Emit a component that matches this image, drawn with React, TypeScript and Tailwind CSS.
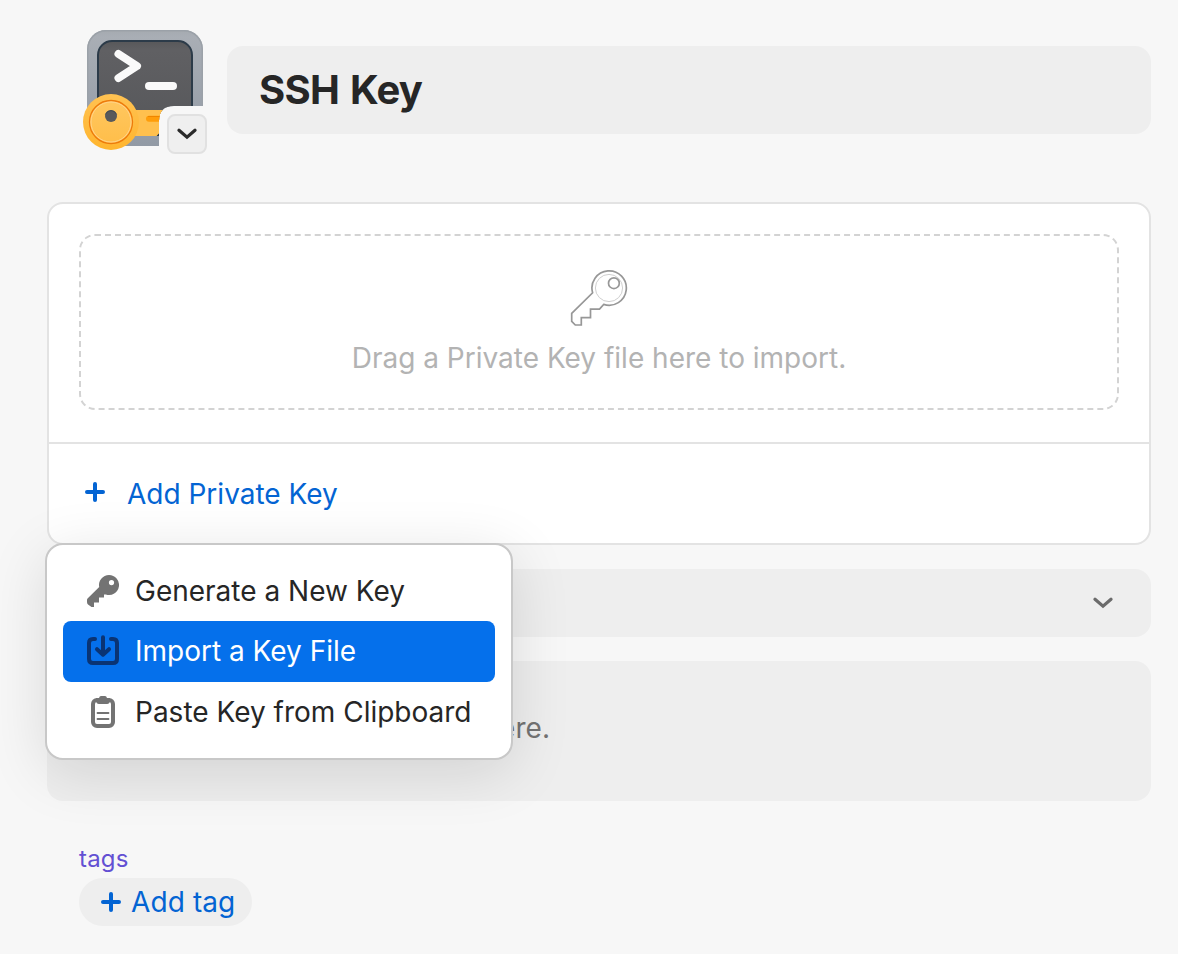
import React from "react";

function SshIcon() {
  return (
    <svg width="124" height="124" viewBox="83 30 124 124" className="block" aria-hidden="true">
      <defs>
        <linearGradient id="frame" x1="0" y1="0" x2="0" y2="1">
          <stop offset="0" stopColor="#a5aab0" />
          <stop offset="0.06" stopColor="#a9aeb5" />
          <stop offset="1" stopColor="#929aa5" />
        </linearGradient>
        <linearGradient id="screen" x1="0" y1="0" x2="0" y2="1">
          <stop offset="0" stopColor="#58585a" />
          <stop offset="0.1" stopColor="#606063" />
          <stop offset="1" stopColor="#56575a" />
        </linearGradient>
        <linearGradient id="gold" x1="0" y1="0" x2="0" y2="1">
          <stop offset="0" stopColor="#ffc252" />
          <stop offset="1" stopColor="#ffb52e" />
        </linearGradient>
        <linearGradient id="disc" x1="0" y1="0" x2="0" y2="1">
          <stop offset="0" stopColor="#ffc75f" />
          <stop offset="1" stopColor="#ffbe4a" />
        </linearGradient>
        <clipPath id="cut">
          <path d="M80 28H207V106H174Q159 106 159 121V154H80Z" />
        </clipPath>
      </defs>
      <g clipPath="url(#cut)">
        <rect x="87" y="30" width="116" height="116" rx="19" fill="url(#frame)" />
        <path d="M87.8 100V49A18.2 18.2 0 0 1 106 30.8H184A18.2 18.2 0 0 1 202.2 49V110" fill="none" stroke="#9ba1a8" strokeWidth="1.4" />
        <rect x="98" y="41" width="94" height="94" rx="14" fill="url(#screen)" stroke="#2c3b49" strokeWidth="2" />
        <path d="M118.500 54 137 66 118.500 78" fill="none" stroke="#fafafa" strokeWidth="8" strokeLinecap="round" strokeLinejoin="round" />
        <path d="M149 86H173" stroke="#fafafa" strokeWidth="8" strokeLinecap="round" />
        <path d="M132 110H170V121L156.500 136H132Z" fill="#ffc04e" />
        <path d="M150 110H170V132.500H159L156 136H150Z" fill="#ffc04e" />
        <path d="M149 118.800H170" stroke="#ff9d0a" strokeWidth="6" strokeLinecap="round" />
        <path d="M148 116.500H170" stroke="#ef8500" strokeWidth="1" />
        <circle cx="111" cy="122" r="28" fill="url(#gold)" />
        <circle cx="111" cy="122" r="21.500" fill="url(#disc)" stroke="#ed7a0b" strokeWidth="1.300" />
        <circle cx="111" cy="122" r="20" fill="none" stroke="#ffd38a" strokeWidth="1" />
        <circle cx="111" cy="116" r="6" fill="#58595b" />
        <path d="M105.400 114.500A6 6 0 0 1 116.600 114.500" fill="none" stroke="#444b52" strokeWidth="1" />
      </g>
    </svg>
  );
}

function Chevron({ className }: { className: string }) {
  return (
    <svg width="20" height="12" viewBox="0 0 20 12" className={className} fill="none" stroke="currentColor" strokeWidth="3.200" strokeLinecap="round" strokeLinejoin="miter" aria-hidden="true">
      <path d="M2 2.200 10 9.200 18 2.200" />
    </svg>
  );
}

function Plus({ className = "" }: { className?: string }) {
  return (
    <svg width="20" height="20" viewBox="0 0 20 20" className={`block shrink-0 ${className}`} stroke="currentColor" strokeWidth="4" strokeLinecap="round" aria-hidden="true">
      <path d="M10 2V18M2 10H18" />
    </svg>
  );
}

function KeyOutline() {
  return (
    <svg width="58" height="58" viewBox="570.3 268.7 58 58" className="block" fill="none" aria-hidden="true">
      <path d="M592.900 292.500A17.200 17.200 0 1 1 604 304.100L599.800 308.800H590.800V317.300H581.600V324.700H575.600L572 321V313Z" fill="#fff" stroke="#979797" strokeWidth="1.700" />
      <circle cx="609.300" cy="287.700" r="13.600" stroke="#cfcfcf" strokeWidth="1" />
      <circle cx="614.200" cy="282.900" r="5.400" stroke="#979797" strokeWidth="1.700" />
    </svg>
  );
}

function KeySolid() {
  return (
    <svg width="32" height="32" viewBox="0 0 32 32" className="block shrink-0" aria-hidden="true">
      <path fillRule="evenodd" fill="#737373" d="M22 0A10 10 0 1 1 18.900 19.500H17V22.500H12V27.500H7V32H4.500L1 29.500Q0 28.500 0 27V25Q0 24 .8 23.200L12.200 12A10 10 0 0 1 22 0ZM24.500 5A2.600 2.600 0 1 0 24.500 10.200A2.600 2.600 0 0 0 24.500 5Z" />
    </svg>
  );
}

function ImportIcon() {
  return (
    <svg width="32" height="32" viewBox="0 0 32 32" className="block shrink-0" fill="none" stroke="#0a3474" strokeWidth="4" strokeLinecap="round" strokeLinejoin="round" aria-hidden="true">
      <path d="M8 4H6Q2 4 2 8V24Q2 28 6 28H26Q30 28 30 24V8Q30 4 26 4H24" />
      <path d="M16 2.300V18M10 14.200 16 19.700 22 14.200" />
    </svg>
  );
}

function ClipboardIcon() {
  return (
    <svg width="32" height="32" viewBox="0 0 32 32" className="block shrink-0" fill="none" stroke="#737373" aria-hidden="true">
      <rect x="6" y="4" width="20" height="26" rx="4" strokeWidth="4" />
      <path d="M9 2H12Q12.500 0 14 0H18Q19.500 0 20 2H23V4Q23 8 20 8H12Q9 8 9 4Z" fill="#737373" stroke="none" />
      <path d="M10.500 17H21.500M10.500 23H21.500" strokeWidth="1.800" strokeLinecap="round" />
    </svg>
  );
}

function MenuItem({ icon, label, active = false }: { icon: React.ReactNode; label: string; active?: boolean }) {
  return (
    <button
      className={
        active
          ? "flex h-[61px] w-full items-center gap-4 rounded-lg bg-[#0570eb] pb-0.5 pl-6 text-white"
          : "flex h-[61px] w-full items-center gap-4 rounded-lg pl-6 text-[#262626] first:pb-0 last:pb-0.5"
      }
    >
      {icon}
      <span className="whitespace-nowrap">{label}</span>
    </button>
  );
}

export default function App() {
  return (
    <main className="h-[954px] w-[1178px] overflow-hidden bg-[#f7f7f7] pl-[47px] pr-[27px] pt-[30px] font-['Inter',sans-serif] text-[28px] leading-[34px]">
      <header className="flex h-[172px] items-start pl-9">
        <div className="relative size-[124px] shrink-0">
          <SshIcon />
          <button className="absolute bottom-0 right-0 flex size-10 items-center justify-center rounded-lg border-2 border-[#e1e1e1] bg-[#efefef]">
            <Chevron className="text-[#2a2a2a]" />
          </button>
        </div>
        <div className="ml-5 mt-4 flex h-[88px] flex-1 items-center rounded-2xl bg-[#eeeeee] pl-8">
          <h1 className="text-[40px] font-bold leading-[48px] tracking-[-0.7px] text-[#262626] [word-spacing:2px]">SSH Key</h1>
        </div>
      </header>

      <section className="relative flex h-[343px] flex-col rounded-2xl border-2 border-[#e3e3e3] bg-white">
        <div className="-mx-0.5 h-[240px] border-b-2 border-[#e3e3e3] px-8 py-[30px]">
          <div className="flex h-[176px] flex-col items-center rounded-2xl border-2 border-dashed border-[#d3d3d3] pt-[33px]">
            <KeyOutline />
            <p className="mt-[14px] text-[#b3b3b3]">Drag a Private Key file here to import.</p>
          </div>
        </div>
        <button className="flex flex-1 items-center gap-[22px] pl-9 text-[#0364d3]">
          <Plus className="mb-[3px]" />
          <span>Add Private Key</span>
        </button>

        <div className="absolute -left-1 top-[339px] z-10 h-[217px] w-[468px] rounded-[18px] border-2 border-[#c8c8c8] bg-white px-4 pt-[15px] shadow-[0_12px_60px_rgba(0,0,0,0.12)]">
          <MenuItem icon={<KeySolid />} label="Generate a New Key" />
          <MenuItem icon={<ImportIcon />} label="Import a Key File" active />
          <MenuItem icon={<ClipboardIcon />} label="Paste Key from Clipboard" />
        </div>
      </section>

      <button className="mt-6 flex h-[68px] w-full items-center justify-end rounded-2xl bg-[#eeeeee] pr-[38px]">
        <Chevron className="text-[#6b6b6b]" />
      </button>
      <div className="mt-6 flex h-[140px] items-center rounded-2xl bg-[#eeeeee] pb-[6px] pl-8">
        <p className="tracking-[0.08px] text-[#737373]">Add any notes about this item here.</p>
      </div>

      <section className="flex flex-col items-start pl-8 pt-[43px]">
        <h2 className="text-2xl leading-[30px] tracking-[0.2px] text-[#6350d3]">tags</h2>
        <button className="mt-1 flex h-12 w-[173px] items-center gap-[10px] rounded-full bg-[#eeeeee] pl-[22px] text-[#0364d3]">
          <Plus />
          <span className="whitespace-nowrap tracking-[0.1px]">Add tag</span>
        </button>
      </section>
    </main>
  );
}
